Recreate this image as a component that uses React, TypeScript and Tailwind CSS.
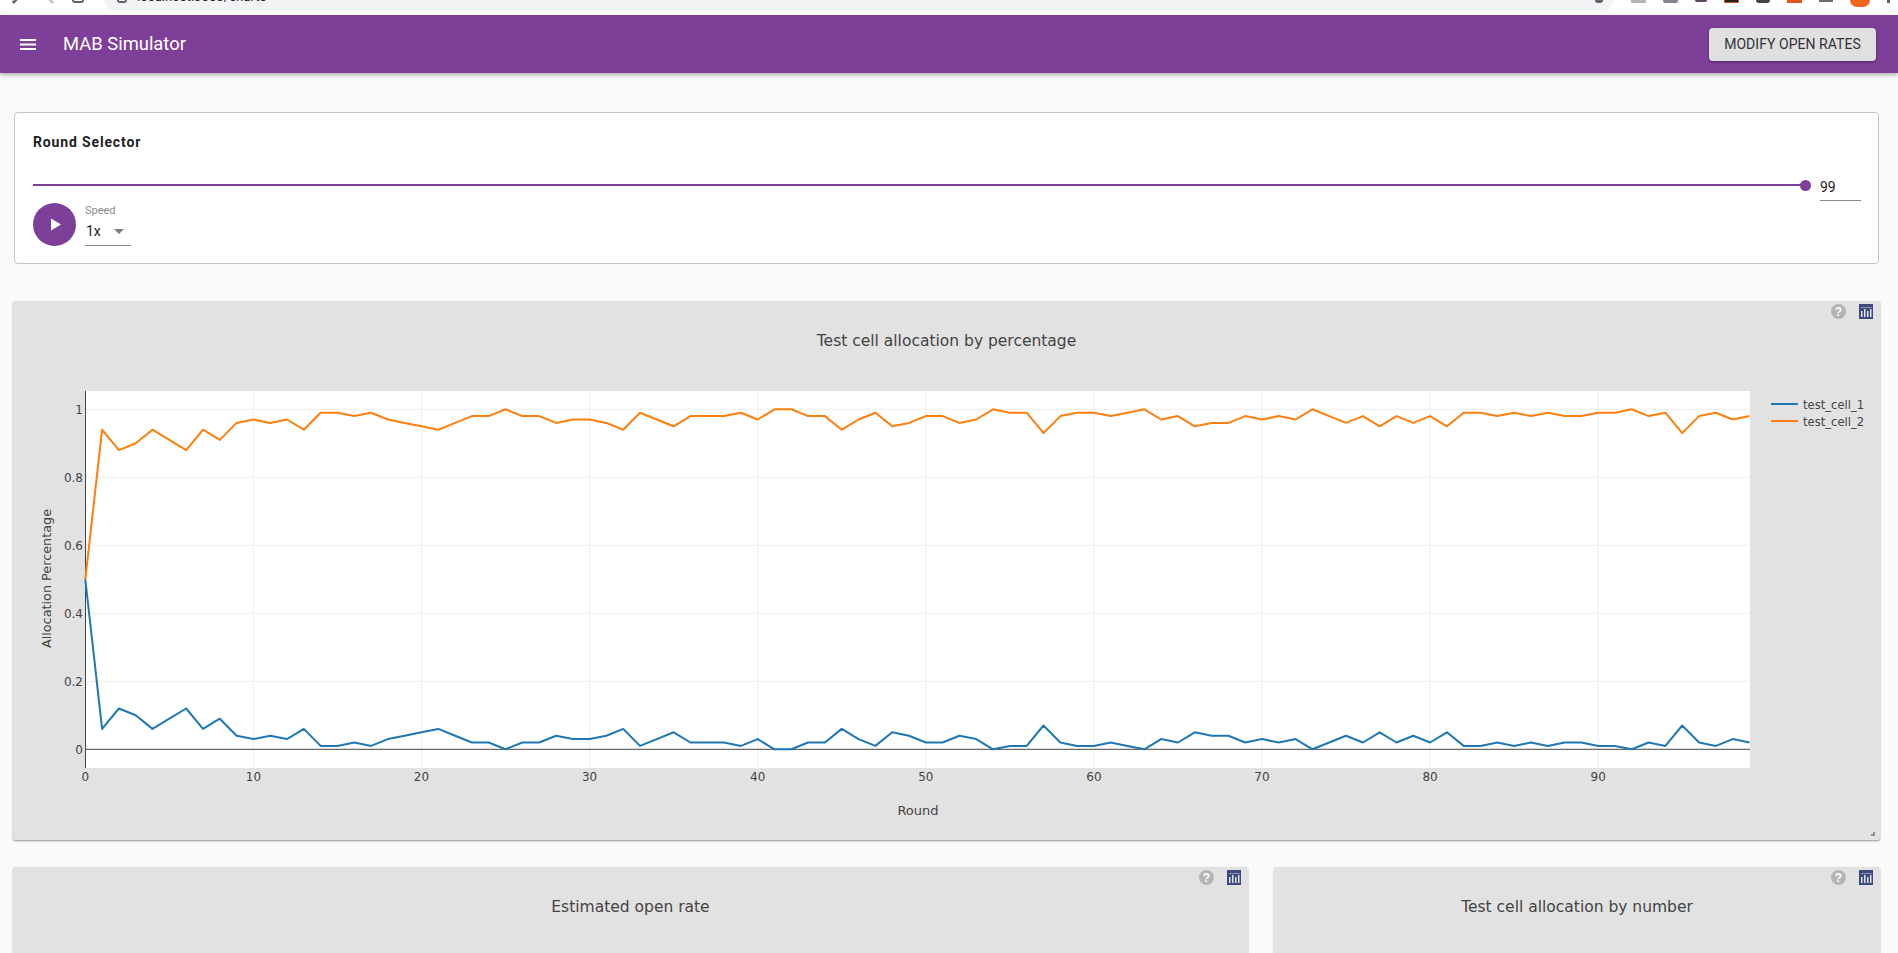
const blue = [
  0.5, 0.06, 0.12, 0.1, 0.06, 0.09, 0.12, 0.06, 0.09, 0.04,
  0.03, 0.04, 0.03, 0.06, 0.01, 0.01, 0.02, 0.01, 0.03, 0.04,
  0.05, 0.06, 0.04, 0.02, 0.02, 0, 0.02, 0.02, 0.04, 0.03,
  0.03, 0.04, 0.06, 0.01, 0.03, 0.05, 0.02, 0.02, 0.02, 0.01,
  0.03, 0, 0, 0.02, 0.02, 0.06, 0.03, 0.01, 0.05, 0.04,
  0.02, 0.02, 0.04, 0.03, 0, 0.01, 0.01, 0.07, 0.02, 0.01,
  0.01, 0.02, 0.01, 0, 0.03, 0.02, 0.05, 0.04, 0.04, 0.02,
  0.03, 0.02, 0.03, 0, 0.02, 0.04, 0.02, 0.05, 0.02, 0.04,
  0.02, 0.05, 0.01, 0.01, 0.02, 0.01, 0.02, 0.01, 0.02, 0.02,
  0.01, 0.01, 0, 0.02, 0.01, 0.07, 0.02, 0.01, 0.03, 0.02,
];

const xAt = (r: number) => 85.3 + r * 16.81;
const yAt = (v: number) => 749.3 - v * 340;
const linePoints = (vals: number[]) =>
  vals.map((v, i) => `${xAt(i).toFixed(1)},${yAt(v).toFixed(1)}`).join(" ");

const tickFont = "'DejaVu Sans', Verdana, sans-serif";

function CardIcons() {
  return (
    <div className="absolute top-[3px] right-[7px] flex items-center gap-[13px]">
      <div className="w-[15px] h-[15px] rounded-full bg-[#b4b4b4] flex items-center justify-center text-white text-[12px] font-bold leading-none font-['Liberation_Sans',sans-serif]">
        ?
      </div>
      <svg width="14" height="15" viewBox="0 0 14 15">
        <rect width="14" height="15" fill="#3d4b7c" />
        <g fill="#dfe3ee">
          <rect x="2" y="7" width="1.5" height="6" />
          <rect x="5" y="5" width="1.5" height="8" />
          <rect x="8" y="7" width="1.5" height="6" />
          <rect x="11" y="5" width="1.5" height="8" />
          <rect x="2" y="3" width="10.5" height="1" opacity="0.5" />
        </g>
      </svg>
    </div>
  );
}

function ChartCard({ title, className = "" }: { title: string; className?: string }) {
  return (
    <div className={`relative bg-[#e2e2e2] rounded-[2px] shadow-[0_1px_2px_rgba(0,0,0,0.35)] ${className}`}>
      <CardIcons />
      <div className="pt-[30px] text-center text-[#444] text-[15.5px] leading-[20px] font-['DejaVu_Sans',Verdana,sans-serif]">
        {title}
      </div>
    </div>
  );
}

function AllocationPlot() {
  const orange = blue.map((v) => 1 - v);
  return (
    <svg width="1867" height="539" viewBox="13 301 1867 539" className="block">
      <rect x="85" y="391" width="1665" height="377" fill="#fff" />
      {[10, 20, 30, 40, 50, 60, 70, 80, 90].map((t) => (
        <line key={t} x1={xAt(t)} x2={xAt(t)} y1="391" y2="768" stroke="#eee" />
      ))}
      {[0.2, 0.4, 0.6, 0.8, 1].map((t) => (
        <line key={t} x1="85" x2="1750" y1={yAt(t)} y2={yAt(t)} stroke="#eee" />
      ))}
      <line x1="85" x2="1750" y1={yAt(0)} y2={yAt(0)} stroke="#444" />
      <line x1="85.5" x2="85.5" y1="391" y2="768" stroke="#444" />
      <polyline points={linePoints(blue)} fill="none" stroke="#1f77b4" strokeWidth="2" strokeLinejoin="round" />
      <polyline points={linePoints(orange)} fill="none" stroke="#ff7f0e" strokeWidth="2" strokeLinejoin="round" />

      <g fontFamily={tickFont} fontSize="12" fill="#444">
        {[0, 0.2, 0.4, 0.6, 0.8, 1].map((t) => (
          <text key={t} x="83" y={yAt(t) + 4.5} textAnchor="end">{t}</text>
        ))}
        {[0, 10, 20, 30, 40, 50, 60, 70, 80, 90].map((t) => (
          <text key={t} x={xAt(t)} y="780.5" textAnchor="middle">{t}</text>
        ))}
        <text x="918" y="815" textAnchor="middle" fontSize="13">Round</text>
        <text x="51" y="578.5" textAnchor="middle" fontSize="12.8" transform="rotate(-90 51 578.5)">Allocation Percentage</text>
        <text x="1803" y="408.5" fontSize="11.6">test_cell_1</text>
        <text x="1803" y="425.5" fontSize="11.6">test_cell_2</text>
      </g>
      <line x1="1771" x2="1798" y1="404" y2="404" stroke="#1f77b4" strokeWidth="2" />
      <line x1="1771" x2="1798" y1="421" y2="421" stroke="#ff7f0e" strokeWidth="2" />
      <path d="M1874 832v3h-3" fill="none" stroke="#777" strokeWidth="1.5" />
    </svg>
  );
}

function BrowserStrip() {
  return (
    <div className="h-[15px] bg-white overflow-hidden flex items-start">
      <div className="w-[104px] flex text-[#5f6368]">
        <div className="ml-[12px] w-[6px] h-[3px] border-b-2 border-l-2 border-[#5f6368] rotate-[-45deg] -mt-[1px]" />
        <div className="ml-[30px] w-[6px] h-[3px] border-b-2 border-r-2 border-[#c4c7ca] rotate-[45deg] -mt-[1px]" />
        <div className="ml-[18px] w-[12px] h-[3px] border-b-2 border-x-2 border-[#5f6368] rounded-b-full" />
      </div>
      <div className="w-[1509px] h-[10px] bg-[#f1f3f4] rounded-b-[10px] flex items-start overflow-hidden">
        <div className="ml-[13px] w-[10px] h-[3px] border-b-2 border-x-2 border-[#5f6368] rounded-b-full" />
        <div className="ml-[10px] -mt-[10px] text-[13.2px] leading-[14px] text-[#222] font-['Roboto',sans-serif]">
          localhost:3000/charts
        </div>
        <div className="ml-auto mr-[10px] w-[8px] h-[3px] bg-[#5f6368] rounded-b-full" />
      </div>
      <div className="ml-[18px] flex items-start gap-[17px]">
        <div className="w-[15px] h-[3px] bg-[#b4b7b4]" />
        <div className="w-[15px] h-[3px] bg-[#80868b] rounded-b-[2px]" />
        <div className="w-[12px] h-[2px] bg-[#5d4560] rounded-b-full" />
        <div className="w-[15px] h-[3px] bg-[#222] border-x border-b border-[#d2501e]" />
        <div className="w-[14px] h-[3px] bg-[#444] rounded-b-full" />
        <div className="w-[15px] h-[3px] bg-[#e0561f]" />
        <div className="w-[14px] h-[2px] bg-[#6b6f73]" />
        <div className="w-[20px] h-[7px] bg-[#f4661b] rounded-b-full" />
        <div className="w-[3px] h-[3px] bg-[#5f6368]" />
      </div>
    </div>
  );
}

export default function App() {
  return (
    <div className="h-screen overflow-hidden bg-[#fafafa] font-['Roboto',sans-serif]">
      <BrowserStrip />
      <header className="h-[58px] bg-[#7e3f98] flex items-center pl-[20px] pr-[22px] shadow-[0_2px_4px_rgba(0,0,0,0.3)] relative">
        <svg width="16" height="11" viewBox="0 0 16 11">
          <path d="M0 1h16M0 5.5h16M0 10h16" stroke="#fff" strokeWidth="1.8" />
        </svg>
        <h1 className="ml-[27px] text-white text-[18.4px] font-normal leading-none">MAB Simulator</h1>
        <button className="ml-auto w-[167px] h-[33px] rounded-[4px] bg-[#e0e0e0] text-[#333] text-[14px] tracking-[0.05px] shadow-[0_1px_3px_rgba(0,0,0,0.4)]">
          MODIFY OPEN RATES
        </button>
      </header>

      <main className="pt-[39px] pl-[13px] pr-[18px]">
        <section className="ml-[1px] mr-[1px] h-[152px] bg-white border border-[#c4c4c4] rounded-[4px] pl-[18px] pr-[17px] pt-[19px]">
          <h2 className="text-[14px] font-bold leading-[20px] tracking-[0.85px] text-[#222]">Round Selector</h2>
          <div className="mt-[32px] flex items-center h-[2px]">
            <div className="flex-1 h-[2px] bg-[#7e3f98]" />
            <div className="w-[11px] h-[11px] rounded-full bg-[#7e3f98] -ml-[1px] shrink-0" />
            <div className="relative w-[41px] ml-[9px] shrink-0">
              <div className="absolute left-0 -top-[8px] w-[41px] h-[24px] border-b border-[#8a8a8a] text-[14px] leading-[20px] text-[#222]">
                99
              </div>
            </div>
          </div>
          <div className="mt-[17px] flex items-start">
            <button className="w-[43px] h-[43px] rounded-full bg-[#7e3f98] flex items-center justify-center">
              <svg width="10" height="13" viewBox="0 0 10 13" className="ml-[2px]"><path d="M0 0.5v12l10-6z" fill="#fff" /></svg>
            </button>
            <div className="ml-[9px] w-[46px] h-[43px] border-b border-[#8a8a8a]">
              <div className="text-[11px] leading-[13px] mt-[1px] text-[#8a8a8a]">Speed</div>
              <div className="mt-[5px] flex items-center justify-between pr-[7px] text-[14px] leading-[18px] text-[#222]">
                <span className="pl-px">1x</span>
                <span className="w-0 h-0 border-x-[5px] border-x-transparent border-t-[5px] border-t-[#7b7b85]" />
              </div>
            </div>
          </div>
        </section>

        <section className="mt-[37px] relative bg-[#e2e2e2] rounded-[2px] shadow-[0_1px_2px_rgba(0,0,0,0.4)]">
          <CardIcons />
          <div className="absolute inset-x-0 top-[30px] text-center text-[#444] text-[15.5px] leading-[20px] font-['DejaVu_Sans',Verdana,sans-serif]">
            Test cell allocation by percentage
          </div>
          <AllocationPlot />
        </section>

        <div className="mt-[27px] flex gap-[26px]">
          <ChartCard title="Estimated open rate" className="w-[1235px] h-[400px]" />
          <ChartCard title="Test cell allocation by number" className="flex-1 h-[400px]" />
        </div>
      </main>
    </div>
  );
}
